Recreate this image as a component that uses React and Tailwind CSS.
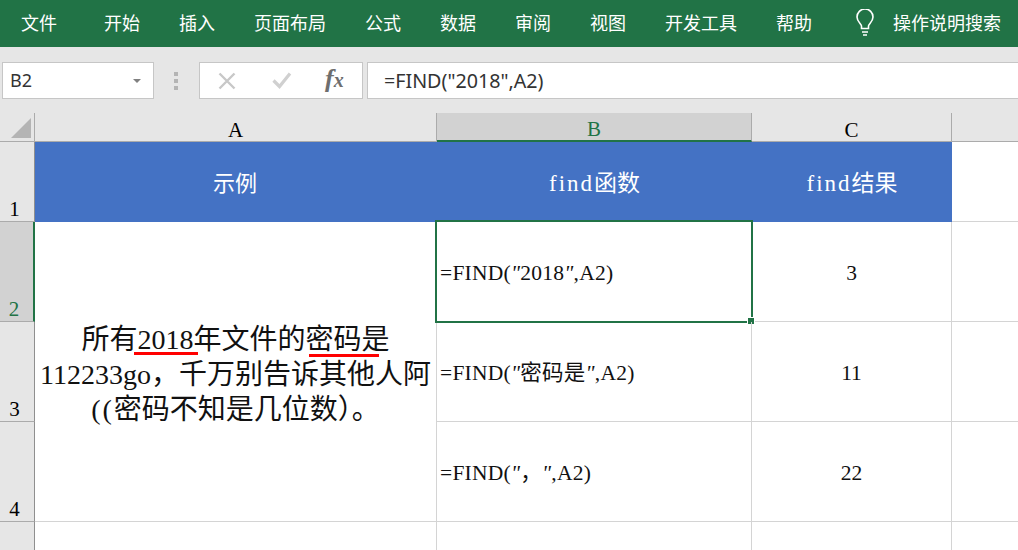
const tabs = ['开始', '插入', '页面布局', '公式', '数据', '审阅', '视图', '开发工具', '帮助'];

const uiFont = "font-['Noto_Sans','Noto_Sans_CJK_SC',sans-serif]";
const serifFont = "font-['Liberation_Serif','Noto_Sans_CJK_SC',serif]";

function ColHead({ label, active }) {
  return (
    <div
      className={`flex items-end justify-center h-[29px] text-[21px] leading-[21px] ${serifFont} border-r border-[#ababab] ${
        active ? 'bg-[#d2d2d2] text-[#217346] border-b-2 border-b-[#217346]' : 'bg-[#e6e6e6] text-black border-b border-b-[#ababab]'
      }`}
    >
      {label}
    </div>
  );
}

function RowHead({ label, active }) {
  return (
    <div
      className={`flex items-end justify-center pr-[5px] text-[21px] leading-[23px] ${serifFont} border-b ${
        active
          ? 'bg-[#d2d2d2] text-[#217346] border-r-2 border-r-[#217346] border-b-[#ababab]'
          : 'bg-[#e6e6e6] text-black border-r border-r-[#8f8f8f] border-b-[#ababab]'
      }`}
    >
      {label}
    </div>
  );
}

function Quote() {
  return <span className="italic">"</span>;
}

function FormulaCell({ children, selected }) {
  return (
    <div className={`relative flex items-center pl-[3px] pt-[4px] text-[21.5px] tracking-[0.25px] text-[#111] whitespace-pre ${serifFont} border-r border-b border-[#d4d4d4]`}>
      {children}
      {selected && (
        <div className="absolute -left-[2px] -top-[2px] -right-[2px] -bottom-[2px] border-2 border-[#217346]">
          <div className="absolute -right-[4px] -bottom-[4px] w-[8px] h-[8px] bg-[#217346] border border-white" />
        </div>
      )}
    </div>
  );
}

function ResultCell({ children }) {
  return (
    <div className={`flex items-center justify-center pt-[4px] text-[21.5px] text-[#111] ${serifFont} border-r border-b border-[#d4d4d4]`}>
      {children}
    </div>
  );
}

function BlankCell() {
  return <div className="border-b border-[#d4d4d4]" />;
}

function Marked({ children, className }) {
  return (
    <span className="relative">
      {children}
      <span className={`absolute h-[3px] bg-[#ff0000] ${className}`} />
    </span>
  );
}

export default function App() {
  return (
    <div className="w-[1018px] h-[550px] overflow-hidden bg-white flex flex-col">
      {/* ribbon tabs */}
      <div className={`h-[47px] shrink-0 bg-[#217346] text-white flex items-center pl-[21px] pb-[1px] text-[18px] ${uiFont}`}>
        <span className="mr-[47px]">文件</span>
        <div className="flex gap-[39px]">
          {tabs.map((t) => (
            <span key={t}>{t}</span>
          ))}
        </div>
        <svg className="ml-[40px] mr-[15px]" width="26" height="28" viewBox="0 0 26 28" fill="none" stroke="white" strokeWidth="1.6">
          <path d="M9.5 19.5v-2.5c0-2-4.5-4-4.5-9a8 8 0 0 1 16 0c0 5-4.5 7-4.5 9v2.5z" />
          <path d="M10 23h6M11 26h4" />
        </svg>
        <span>操作说明搜索</span>
      </div>

      {/* formula bar */}
      <div className={`h-[66px] shrink-0 bg-[#e6e6e6] flex items-start pt-[15px] text-[#333] ${uiFont}`}>
        <div className="ml-[2px] w-[152px] h-[37px] bg-white border border-[#c6c6c6] flex items-center justify-between pl-[7px] pr-[12px] text-[18px]">
          <span>B2</span>
          <span className="w-0 h-0 border-l-[4px] border-r-[4px] border-t-[4px] border-l-transparent border-r-transparent border-t-[#808080]" />
        </div>
        <div className="w-[45px] h-[37px] flex flex-col items-center justify-center gap-[3px] pr-[1px]">
          <span className="w-[4px] h-[4px] bg-[#b4b4b4]" />
          <span className="w-[4px] h-[4px] bg-[#b4b4b4]" />
          <span className="w-[4px] h-[4px] bg-[#b4b4b4]" />
        </div>
        <div className="w-[164px] h-[37px] bg-white border border-[#c6c6c6] flex items-center pl-[18px]">
          <svg width="18" height="18" viewBox="0 0 18 18" fill="none" stroke="#c8c8c8" strokeWidth="2.4">
            <path d="M1.5 1.5l15 15M16.5 1.5l-15 15" />
          </svg>
          <svg className="ml-[36px]" width="20" height="17" viewBox="0 0 20 17" fill="none" stroke="#d0d0d0" strokeWidth="3.2">
            <path d="M1.5 8.5l6 6 10.5-13" />
          </svg>
          <span className={`ml-[33px] pb-[4px] text-[26px] leading-none italic font-bold text-[#6e6e6e] ${serifFont}`}>
            f<span className="text-[20px]">x</span>
          </span>
        </div>
        <div className="ml-[4px] flex-1 h-[37px] bg-white border-y border-l border-[#c6c6c6] flex items-center pl-[16px] text-[19.7px]">
          =FIND("2018",A2)
        </div>
      </div>

      {/* sheet */}
      <div className="flex-1 grid grid-cols-[35px_402px_315px_200px_1fr] grid-rows-[29px_80px_100px_100px_100px_1fr]">
        <div className="relative bg-[#e6e6e6] border-r border-b border-[#ababab]">
          <div className="absolute right-[3px] bottom-[3px] w-0 h-0 border-l-[20px] border-b-[20px] border-l-transparent border-b-[#b4b4b4]" />
        </div>
        <ColHead label="A" />
        <ColHead label="B" active />
        <ColHead label="C" />
        <div className="bg-[#e6e6e6] border-b border-[#ababab]" />

        <RowHead label="1" />
        <div className={`bg-[#4472c4] text-white flex items-center justify-center pt-[1px] pr-[2px] text-[22px] ${uiFont}`}>示例</div>
        <div className={`bg-[#4472c4] text-white flex items-center justify-center pt-[4px] text-[23px] ${serifFont}`}>
          <span className="tracking-[2px]">find</span>函数
        </div>
        <div className={`bg-[#4472c4] text-white flex items-center justify-center pt-[4px] text-[23px] ${serifFont}`}>
          <span className="tracking-[2px]">find</span>结果
        </div>
        <BlankCell />

        <RowHead label="2" active />
        <div className={`row-span-3 flex items-center justify-center pt-[5px] text-center text-[28px] leading-[35px] text-[#111] ${serifFont} border-r border-b border-[#d4d4d4]`}>
          <div className="w-[400px]">
            所有<Marked className="-left-[3px] -right-[5px] top-[28px]">2018</Marked>年文件的
            <Marked className="left-[3px] right-[11px] top-[30px]">密码是</Marked>
            <br />
            112233go，千万别告诉其他人阿
            <br />
            <span className="tracking-[2px]">((</span>密码不知是几位数）。
          </div>
        </div>
        <FormulaCell selected>
          =FIND(<Quote />2018<Quote />,A2)
        </FormulaCell>
        <ResultCell>3</ResultCell>
        <BlankCell />

        <RowHead label="3" />
        <FormulaCell>
          =FIND(<Quote />密码是<Quote />,A2)
        </FormulaCell>
        <ResultCell>11</ResultCell>
        <BlankCell />

        <RowHead label="4" />
        <FormulaCell>
          =FIND(<Quote />，<Quote />,A2)
        </FormulaCell>
        <ResultCell>22</ResultCell>
        <BlankCell />

        <div className="bg-[#e6e6e6] border-r border-[#8f8f8f]" />
        <div className="border-r border-[#d4d4d4]" />
        <div className="border-r border-[#d4d4d4]" />
        <div className="border-r border-[#d4d4d4]" />
        <div />
      </div>
    </div>
  );
}
